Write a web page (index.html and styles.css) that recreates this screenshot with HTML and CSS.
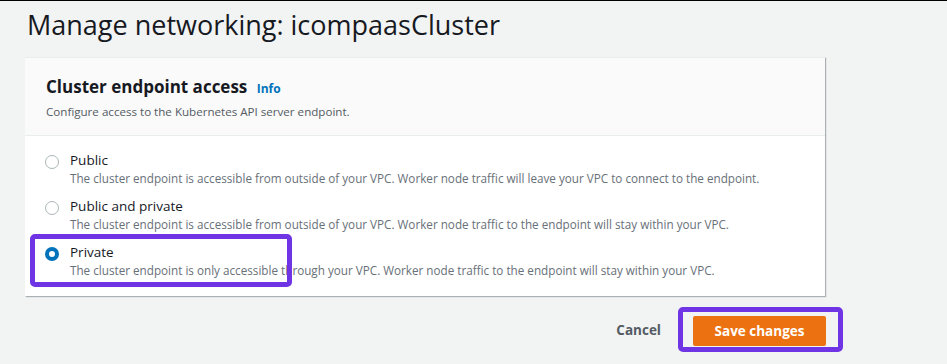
FILE: index.html
```html
<!DOCTYPE html>
<html lang="en">
<head>
    <meta charset="UTF-8">
    <title>Manage networking</title>
    <link rel="stylesheet" href="styles.css">
</head>
<body>
    <h1 class="page-title">Manage networking: icompaasCluster</h1>

    <div class="card">
        <div class="card-header">
            <h2>Cluster endpoint access <a class="info" href="#">Info</a></h2>
            <p class="card-desc">Configure access to the Kubernetes API server endpoint.</p>
        </div>
        <div class="card-body">
            <label class="option">
                <span class="radio"></span>
                <span class="option-text">
                    <span class="option-label">Public</span>
                    <span class="option-desc">The cluster endpoint is accessible from outside of your VPC. Worker node traffic will leave your VPC to connect to the endpoint.</span>
                </span>
            </label>
            <label class="option">
                <span class="radio"></span>
                <span class="option-text">
                    <span class="option-label">Public and private</span>
                    <span class="option-desc">The cluster endpoint is accessible from outside of your VPC. Worker node traffic to the endpoint will stay within your VPC.</span>
                </span>
            </label>
            <label class="option">
                <span class="radio checked"></span>
                <span class="option-text">
                    <span class="option-label">Private</span>
                    <span class="option-desc">The cluster endpoint is only accessible through your VPC. Worker node traffic to the endpoint will stay within your VPC.</span>
                </span>
                <span class="highlight highlight-private"></span>
            </label>
        </div>
    </div>

    <div class="footer">
        <button class="btn-link">Cancel</button>
        <span class="save-wrap">
            <button class="btn-primary">Save changes</button>
        </span>
    </div>
</body>
</html>
```

FILE: styles.css
```css
body { margin: 0; background: #f2f3f3; border-top: 1px solid #000; font-family: "Open Sans", "Noto Sans", Arial, sans-serif; color: #16191f; }
.page-title { margin: 0; padding: 4px 0 0 27px; height: 52px; font-size: 27px; font-weight: 400; line-height: 40px; color: #16191f; }
.card { margin-left: 25px; width: 800px; background: #fff; box-shadow: 1px 1px 1px 0 rgba(0, 28, 36, 0.3); border-top: 1px solid #eaeded; }
.card-header { background: #fafafa; border-bottom: 1px solid #eaeded; padding: 16px 20px 18px 21px; height: 43px; }
.card-header h2 { margin: 0; font-size: 17px; font-weight: 700; line-height: 26px; }
.info { color: #0073bb; font-size: 12px; font-weight: 700; text-decoration: none; margin-left: 5px; }
.card-desc { margin: 2px 0 0; font-size: 11.6px; color: #545b64; line-height: 16px; }
.card-body { padding: 14px 20px 17px 19px; display: flex; flex-direction: column; gap: 9px; }
.option { position: relative; display: flex; align-items: flex-start; gap: 11px; }
.radio { width: 12px; height: 12px; border: 1px solid #aab7b8; border-radius: 50%; margin: 5px 0 0 1px; flex-shrink: 0; box-sizing: content-box; }
.radio.checked { border: 4px solid #0073bb; width: 6px; height: 6px; }
.option-text { display: flex; flex-direction: column; }
.option-label { font-size: 13.5px; line-height: 20px; }
.option-desc { font-size: 11.7px; line-height: 17px; color: #687078; }
.highlight { position: absolute; border: 5px solid #6f35e5; border-radius: 5px; pointer-events: none; }
.highlight-private { left: -14px; top: -8px; width: 252px; height: 43px; }
.footer { display: flex; justify-content: flex-end; align-items: center; width: 826px; margin-top: 11px; }
.btn-link { background: none; border: none; font-family: inherit; font-size: 13.5px; font-weight: 700; color: #545b64; padding: 0; margin-right: 17px; cursor: pointer; }
.save-wrap { border: 5px solid #6f35e5; border-radius: 5px; padding: 4px 12px 1px 10px; margin-right: -17px; }
.btn-primary { display: block; background: #ec7211; color: #fff; border: none; border-radius: 2px; font-family: inherit; font-size: 13.5px; font-weight: 700; width: 133px; height: 30px; padding: 0; cursor: pointer; }
```
